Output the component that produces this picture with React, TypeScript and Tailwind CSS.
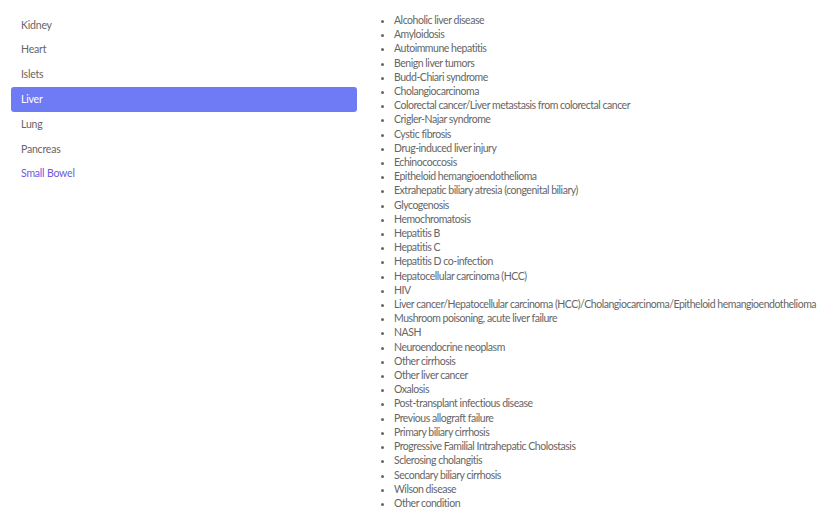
import { useState } from 'react';

const organs = ['Kidney', 'Heart', 'Islets', 'Liver', 'Lung', 'Pancreas', 'Small Bowel'];

const liverConditions = [
  'Alcoholic liver disease',
  'Amyloidosis',
  'Autoimmune hepatitis',
  'Benign liver tumors',
  'Budd-Chiari syndrome',
  'Cholangiocarcinoma',
  'Colorectal cancer/Liver metastasis from colorectal cancer',
  'Crigler-Najar syndrome',
  'Cystic fibrosis',
  'Drug-induced liver injury',
  'Echinococcosis',
  'Epitheloid hemangioendothelioma',
  'Extrahepatic biliary atresia (congenital biliary)',
  'Glycogenosis',
  'Hemochromatosis',
  'Hepatitis B',
  'Hepatitis C',
  'Hepatitis D co-infection',
  'Hepatocellular carcinoma (HCC)',
  'HIV',
  'Liver cancer/Hepatocellular carcinoma (HCC)/Cholangiocarcinoma/Epitheloid hemangioendothelioma',
  'Mushroom poisoning, acute liver failure',
  'NASH',
  'Neuroendocrine neoplasm',
  'Other cirrhosis',
  'Other liver cancer',
  'Oxalosis',
  'Post-transplant infectious disease',
  'Previous allograft failure',
  'Primary biliary cirrhosis',
  'Progressive Familial Intrahepatic Cholostasis',
  'Sclerosing cholangitis',
  'Secondary biliary cirrhosis',
  'Wilson disease',
  'Other condition'
];

export default function App() {
  const [active, setActive] = useState('Liver');

  return (
    <div className="w-[824px] h-[516px] bg-white overflow-hidden flex font-['Lato',sans-serif]">
      {/* Organ tabs */}
      <nav className="w-[346px] ml-[11px] pt-[13px] flex flex-col shrink-0">
        {organs.map((organ) => (
          <button
            key={organ}
            onClick={() => setActive(organ)}
            className={`h-[24.8px] px-[10px] text-left text-[10.5px] tracking-[-0.2px] rounded-[3px] ${
              active === organ
                ? 'bg-[#6f7bf5] text-white'
                : organ === 'Small Bowel'
                  ? 'text-[#6a5ae0]'
                  : 'text-[#666]'
            }`}
          >
            {organ}
          </button>
        ))}
      </nav>

      {/* Conditions list */}
      <ul className="ml-[26px] pt-[13px] list-disc pl-[11px] text-[10.5px] tracking-[-0.47px] leading-[14.2px] text-[#666] marker:text-[#666] whitespace-nowrap">
        {liverConditions.map((c) => (
          <li key={c}>{c}</li>
        ))}
      </ul>
    </div>
  );
}
